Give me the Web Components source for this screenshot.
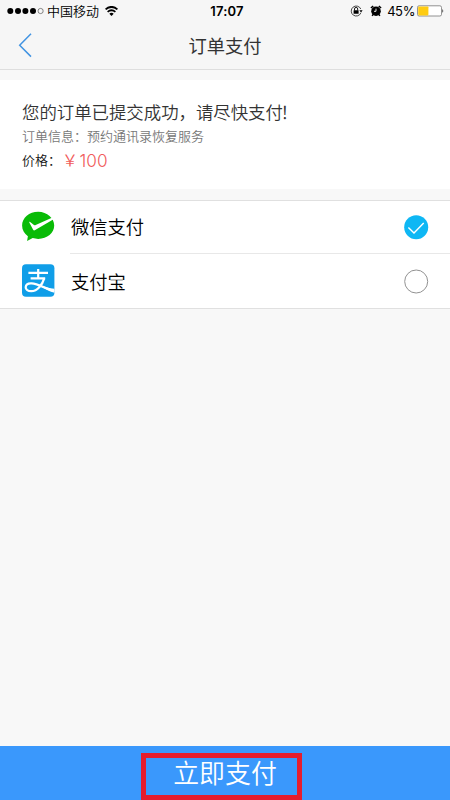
<!DOCTYPE html>
<html lang="zh-CN">
<head>
<meta charset="utf-8">
<title>订单支付</title>
<style>
html,body{margin:0;height:100%}
body{font-family:Inter,"Noto Sans CJK SC",sans-serif;background:#f8f8f8;overflow:hidden}
</style>
</head>
<body>
<pay-page></pay-page>
<script>
const define = (name, html) => customElements.define(name, class extends HTMLElement {
  constructor() {
    super();
    const t = document.createElement('template');
    t.innerHTML = html;
    this.attachShadow({mode: 'open'}).append(t.content.cloneNode(true));
  }
});

define('status-bar', `
<style>
:host{display:grid;grid-template-columns:1fr auto 1fr;align-items:center;height:22px;padding:0 6px 0 7px;color:#000;font-size:13px;line-height:22px}
div{display:flex;align-items:center}
.carrier{margin-left:3px;font-weight:350}
.wifi{margin-left:6px}
.time{font-weight:600;font-size:13px;letter-spacing:.2px;padding-left:3px}
.right{justify-content:flex-end}
.alarm{margin-left:7px}
.pct{margin-left:5px;margin-right:2px;font-size:13px;letter-spacing:-.4px}
svg{display:block;flex:none}
</style>
<div>
<svg width="37" height="8" viewBox="0 0 37 8"><circle cx="3.3" cy="4" r="3"/><circle cx="11" cy="4" r="3"/><circle cx="18.4" cy="4" r="3"/><circle cx="26" cy="4" r="3"/><circle cx="33.6" cy="4" r="2.6" fill="none" stroke="#555" stroke-width=".7"/></svg>
<span class="carrier">中国移动</span>
<svg class="wifi" width="13" height="10" viewBox="0 0 13 10" fill="none" stroke="#000"><path d="M.6 3.4Q6.5-1.6 12.4 3.4" stroke-width="1.9"/><path d="M2.6 5.9Q6.5 2.6 10.4 5.9" stroke-width="1.7"/><path d="M4.3 7.7Q6.5 5.9 8.7 7.7L6.5 9.9Z" fill="#000" stroke="none"/></svg>
</div>
<span class="time">17:07</span>
<div class="right">
<svg width="13" height="12" viewBox="0 0 13 12"><path d="M10.9 7.8A5 5 0 1 1 10.8 4" fill="none" stroke="#333" stroke-width=".9"/><path d="M9.4 5.3h3.2l-1.6 2.2z"/><rect x="3.6" y="5.2" width="5" height="3.6" rx=".4"/><path d="M4.5 5.5V4a1.6 1.6 0 0 1 3.2 0v1.5" fill="none" stroke="#000" stroke-width=".9"/></svg>
<svg class="alarm" width="12" height="12" viewBox="0 0 12 12"><circle cx="6" cy="6.2" r="4.8"/><path d="M.9 3L3.2 1M11.1 3L8.8 1M3 9.5L2.2 10.8M9 9.5L9.8 10.8" stroke="#000" stroke-width="1.5"/><path d="M6 3.6V6.3H4" fill="none" stroke="#fff" stroke-width=".9"/></svg>
<span class="pct">45%</span>
<svg width="27" height="12" viewBox="0 0 27 12"><rect x=".5" y=".8" width="24" height="10.2" rx="1.6" fill="#fff" stroke="#666" stroke-width=".7"/><rect x="1.2" y="1.4" width="10.2" height="9" rx=".8" fill="#fc1"/><path d="M25.3 4Q27.2 5.9 25.3 7.8z" fill="#444"/></svg>
</div>`);

define('nav-header', `
<style>
:host{display:grid;grid-template-columns:60px 1fr 60px;align-items:center;height:47px;border-bottom:1px solid #dedede}
svg{margin-left:18px;margin-bottom:2px;display:block}
span{text-align:center;font-size:18.3px;line-height:26px;color:#333}
</style>
<svg width="15" height="26" viewBox="0 0 15 26"><path d="M13 1.8L1.7 13.2 13 24.6" fill="none" stroke="#4294e2" stroke-width="1.5"/></svg>
<span><slot></slot></span>`);

define('order-summary', `
<style>
:host{display:block;box-sizing:border-box;height:109px;margin-top:10px;padding:19px 22px 0;background:#fff}
h1{margin:0;font-size:17.4px;line-height:27px;font-weight:350;color:#333;white-space:nowrap}
p{margin:0;font-size:13px;line-height:20px;color:#777;font-weight:350}
.price{display:flex;align-items:flex-start;margin-top:2px;line-height:25px;color:#111}
b{font-weight:350;font-size:17.2px;color:#f15b5b;margin-left:2px;display:flex;line-height:25px;height:27px}
i{font:inherit;width:16.5px;font-size:16px;text-indent:-1px}
</style>
<h1><slot name="message"></slot></h1>
<p><slot name="info"></slot></p>
<p class="price"><span>价格：</span><b><i>￥</i><slot name="amount"></slot></b></p>`);

define('wechat-icon', `
<style>:host,svg{display:block}</style>
<svg width="34" height="34" viewBox="0 0 34 34"><path d="M16.2.8C7.2.8.1 6.9.1 14.6c0 4.4 2.2 8.1 5.8 10.6L5.1 30l5.6-2.9c1.8.5 3.6.8 5.5.8 9 0 16-6 16-13.3S25.2.8 16.2.8z" fill="#09bb07"/><path d="M7.8 10.8l4.2 3.1q.8.5 1.7.1L31 6.3l1 1.8-18.8 11q-1.5.9-2.2-.7L7.3 11.4q-.2-.8.5-.6z" fill="#fff"/></svg>`);

define('alipay-icon', `
<style>:host{display:block;padding-bottom:2px}svg{display:block}</style>
<svg width="34" height="34" viewBox="0 0 34 34"><rect x="0" y=".3" width="32.4" height="32.4" rx="4" fill="#109ee8"/><g fill="none" stroke="#fff"><path d="M6.4 8.9H26M8.6 14.4h14.6M16.2 5v9.4" stroke-width="2.2"/><path d="M22.2 14.4C20.6 20.2 15.6 27 9.2 27.2c-3.2 0-5.6-1.5-5.5-4 .2-2.6 2.7-4 5.9-3.8 6.2.4 13.4 4.8 22.6 7.6" stroke-width="2.2"/></g><path d="M17 20.4c5 2 9.8 3.6 15.4 4.4v4c-5.6-1.5-10.2-3.9-15.4-7.2z" fill="#fff"/></svg>`);

define('radio-mark', `
<style>
:host,svg{display:block}
.on{display:none}
:host([checked]) .on{display:block}
:host([checked]) .off{display:none}
</style>
<svg class="on" width="25" height="25" viewBox="0 0 25 25"><circle cx="12.2" cy="12.2" r="12" fill="#0eb7f4"/><path d="M4.4 12.4l5.6 5.5L19.7 7.9" fill="none" stroke="#fff" stroke-width="1.4"/></svg>
<svg class="off" width="25" height="25" viewBox="0 0 25 25"><circle cx="12.2" cy="12.5" r="11.5" fill="#fff" stroke="#929292"/></svg>`);

define('pay-option', `
<style>
:host{display:flex;box-sizing:border-box;padding:1px 0 0 22px;height:54px;background:#fff}
.icon{width:48px;display:flex;align-items:center}
.body{flex:1;display:flex;align-items:center;justify-content:space-between;box-sizing:border-box;padding:0 21px 0 1px;font-size:18.3px;line-height:28px;color:#000;font-weight:350}
:host([divider]) .body{border-bottom:1px solid #e8e8e8}
:host([divider]){height:53px;padding-top:0}
</style>
<div class="icon"><slot name="icon"></slot></div>
<div class="body"><span><slot></slot></span><slot name="mark"></slot></div>`);

define('option-list', `
<style>:host{display:block;margin-top:11px;border-top:1px solid #e0e0e0;border-bottom:1px solid #e0e0e0;background:#fff}</style>
<slot></slot>`);

define('pay-button', `
<style>
:host{display:flex;justify-content:center;box-sizing:border-box;height:54px;margin-top:auto;padding:7px 7px 0 0;background:#3a98fc;color:#fff}
span{box-sizing:border-box;width:161px;height:47px;border:5px solid #e51c2d;text-align:center;font-size:25.9px;line-height:32px;padding-left:7px;font-weight:350;white-space:nowrap}
</style>
<span><slot></slot></span>`);

define('pay-page', `
<style>:host{display:flex;flex-direction:column;height:100vh;background:#f8f8f8}
.top{background:#f6f6f6}
.tight{letter-spacing:-2.4px}</style>
<div class="top"><status-bar></status-bar><nav-header>订单支付</nav-header></div>
<order-summary><span slot="message">您的订单已提交成功，请尽快支<span class="tight">付！</span></span><span slot="info">订单信息：预约通讯录恢复服务</span><span slot="amount">100</span></order-summary>
<option-list>
<pay-option divider><wechat-icon slot="icon"></wechat-icon>微信支付<radio-mark slot="mark" checked></radio-mark></pay-option>
<pay-option><alipay-icon slot="icon"></alipay-icon>支付宝<radio-mark slot="mark"></radio-mark></pay-option>
</option-list>
<pay-button>立即支付</pay-button>`);
</script>
</body>
</html>
